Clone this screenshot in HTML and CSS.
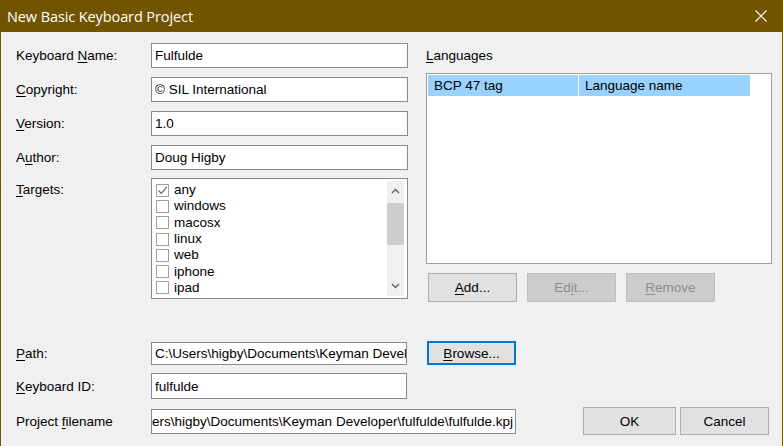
FILE: index.html
```html
<!DOCTYPE html>
<html>
<head>
<meta charset="utf-8">
<link rel="stylesheet" href="styles.css">
</head>
<body>
<div class="window">
  <div class="titlebar">
    <span class="title">New Basic Keyboard Project</span>
    <svg class="close" width="12" height="12" viewBox="0 0 12 12"><path d="M0.5 0.5L11.5 11.5M11.5 0.5L0.5 11.5" stroke="#ffffff" stroke-width="1.1" fill="none"/></svg>
  </div>
  <div class="content">
    <div class="top">
      <div class="form">
        <div class="lbl">Keyboard <u>N</u>ame:</div>
        <div class="edit">Fulfulde</div>
        <div class="lbl"><u>C</u>opyright:</div>
        <div class="edit">© SIL International</div>
        <div class="lbl"><u>V</u>ersion:</div>
        <div class="edit">1.0</div>
        <div class="lbl">A<u>u</u>thor:</div>
        <div class="edit">Doug Higby</div>
        <div class="lbl lbl-top"><u>T</u>argets:</div>
        <div class="checklist">
          <div class="items">
            <div class="item"><span class="cb checked"><svg width="11" height="11" viewBox="0 0 11 11"><path d="M1.5 5.5L4.2 8.3L9.8 2" stroke="#6a6a6a" stroke-width="1.2" fill="none"/></svg></span>any</div>
            <div class="item"><span class="cb"></span>windows</div>
            <div class="item"><span class="cb"></span>macosx</div>
            <div class="item"><span class="cb"></span>linux</div>
            <div class="item"><span class="cb"></span>web</div>
            <div class="item"><span class="cb"></span>iphone</div>
            <div class="item"><span class="cb"></span>ipad</div>
            <div class="item"><span class="cb"></span>androidphone</div>
          </div>
          <div class="scrollbar">
            <div class="sb-btn"><svg width="9" height="6" viewBox="0 0 9 6"><path d="M1 5L4.5 1.5L8 5" stroke="#606060" stroke-width="1.4" fill="none"/></svg></div>
            <div class="sb-track"><div class="sb-thumb"></div></div>
            <div class="sb-btn"><svg width="9" height="6" viewBox="0 0 9 6"><path d="M1 1L4.5 4.5L8 1" stroke="#606060" stroke-width="1.4" fill="none"/></svg></div>
          </div>
        </div>
      </div>
      <div class="langs">
        <div class="langs-lbl"><u>L</u>anguages</div>
        <div class="listview">
          <div class="lv-header">
            <div class="lv-col col1">BCP 47 tag</div>
            <div class="lv-col col2">Language name</div>
          </div>
        </div>
        <div class="lang-buttons">
          <div class="btn"><u>A</u>dd...</div>
          <div class="btn disabled">Ed<u>i</u>t...</div>
          <div class="btn disabled"><u>R</u>emove</div>
        </div>
      </div>
    </div>
    <div class="bottom">
      <div class="lbl r1 c1"><u>P</u>ath:</div>
      <div class="edit edit-path r1 c2">C:\Users\higby\Documents\Keyman Developer\fulfulde</div>
      <div class="btn btn-default r1 c4"><u>B</u>rowse...</div>
      <div class="lbl r2 c1"><u>K</u>eyboard ID:</div>
      <div class="edit edit-id r2 c2">fulfulde</div>
      <div class="lbl r3 c1">Project <u>f</u>ilename</div>
      <div class="edit edit-file r3"><span>C:\Users\higby\Documents\Keyman Developer\fulfulde\fulfulde.kpj</span></div>
      <div class="dlg-buttons r3 c5">
        <div class="btn btn-ok">OK</div>
        <div class="btn btn-cancel">Cancel</div>
      </div>
    </div>
  </div>
</div>
</body>
</html>
```

FILE: styles.css
```css
* { box-sizing: border-box; }
html, body { margin: 0; padding: 0; }
body {
  width: 783px;
  height: 446px;
  overflow: hidden;
  background: #f0f0f0;
  font-family: "Liberation Sans", Arial, sans-serif;
  font-size: 13.5px;
  color: #000;
}
u { text-decoration: underline; text-underline-offset: 2px; }

.window {
  height: 446px;
  border-left: 1px solid #715400;
  border-right: 1px solid #715400;
  background: #f0f0f0;
}
.titlebar {
  height: 32px;
  background: #715400;
  display: flex;
  align-items: center;
  justify-content: space-between;
  padding: 0 15px 0 6px;
}
.title {
  color: #fff;
  font-family: "Open Sans", "Noto Sans", sans-serif;
  font-size: 14.5px;
  letter-spacing: -0.1px;
  padding-top: 1px;
}
.close { display: block; }

.content { padding: 11px 10px 0 15px; }

.top { display: flex; gap: 18px; height: 270px; }

.form {
  display: grid;
  grid-template-columns: 135px 257px;
  grid-template-rows: 25px 25px 25px 25px 120px;
  row-gap: 9px;
  align-items: center;
}
.form .checklist { margin-top: -1px; }
.lbl { white-space: nowrap; }
.lbl-top { align-self: start; padding-top: 3px; }

.edit {
  height: 25px;
  border: 1px solid #8a8a8a;
  background: #fff;
  padding: 0 3px;
  display: flex;
  align-items: center;
  white-space: nowrap;
  overflow: hidden;
}

.checklist {
  height: 121px;
  border: 1px solid #8a8a8a;
  background: #fff;
  display: flex;
  padding: 2px 3px 2px 4px;
  align-self: start;
}
.items { flex: 1; overflow: hidden; padding-top: 1px; }
.item {
  height: 16.3px;
  display: flex;
  align-items: center;
  gap: 5px;
  white-space: nowrap;
  line-height: 16px;
}
.cb {
  width: 13px;
  height: 13px;
  border: 1px solid #a0a0a0;
  background: #fff;
  flex: none;
  display: flex;
  align-items: center;
  justify-content: center;
}
.cb svg { display: block; }

.scrollbar {
  width: 17px;
  background: #f0f0f0;
  display: flex;
  flex-direction: column;
}
.sb-btn {
  height: 20px;
  display: flex;
  align-items: center;
  justify-content: center;
}
.sb-track { flex: 1; padding-top: 2px; }
.sb-thumb { height: 42px; background: #cdcdcd; }

.langs { width: 346px; display: flex; flex-direction: column; }
.langs-lbl { height: 25px; line-height: 25px; margin-bottom: 5px; }
.listview {
  height: 191px;
  border: 1px solid #a0a0a0;
  background: #fff;
  padding: 1px;
}
.lv-header { display: flex; height: 21px; gap: 1px; }
.lv-col {
  background: #99d1ff;
  height: 21px;
  line-height: 21px;
  padding-left: 6px;
  white-space: nowrap;
}
.col1 { width: 150px; }
.col2 { width: 171px; }

.lang-buttons { display: flex; gap: 10px; margin-top: 9px; padding-left: 2px; }

.btn {
  width: 89px;
  height: 29px;
  border: 1px solid #adadad;
  background: #e1e1e1;
  display: flex;
  align-items: center;
  justify-content: center;
  white-space: nowrap;
}
.btn.disabled {
  background: #cccccc;
  border-color: #bfbfbf;
  color: #8d8d8d;
}

.bottom {
  margin-top: 28px;
  display: grid;
  grid-template-columns: 135px 256px 20px 89px 1fr;
  grid-template-rows: 24px 26px 28px;
  row-gap: 8px;
  align-items: center;
}
.r1 { grid-row: 1; }
.r2 { grid-row: 2; }
.r3 { grid-row: 3; }
.c1 { grid-column: 1; }
.c2 { grid-column: 2; }
.c4 { grid-column: 4; }
.c5 { grid-column: 5; }
.edit-path { height: 23px; }
.edit-id { height: 26px; }
.edit-file {
  grid-column: 2 / 5;
  height: 25px;
  justify-content: flex-end;
  padding-right: 2px;
}
.edit-file span { flex: none; }
.btn-default {
  height: 24px;
  border-color: #0078d7;
  box-shadow: inset 0 0 0 1px #0078d7;
}
.dlg-buttons {
  justify-self: end;
  display: flex;
  gap: 4px;
  margin-right: 3px;
}
.btn-ok { width: 93px; height: 28px; }
.btn-cancel { width: 89px; height: 28px; }
```
